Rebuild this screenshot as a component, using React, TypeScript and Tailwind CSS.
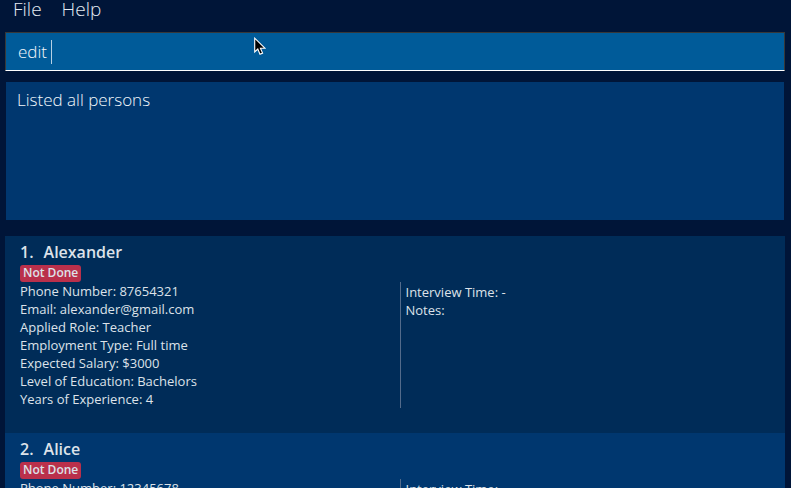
import { useState } from "react";

type Person = {
  name: string;
  status: string;
  details: [string, string][];
  interviewTime: string;
  notes: string;
};

const persons: Person[] = [
  {
    name: "Alexander",
    status: "Not Done",
    details: [
      ["Phone Number", "87654321"],
      ["Email", "alexander@gmail.com"],
      ["Applied Role", "Teacher"],
      ["Employment Type", "Full time"],
      ["Expected Salary", "$3000"],
      ["Level of Education", "Bachelors"],
      ["Years of Experience", "4"],
    ],
    interviewTime: "-",
    notes: "",
  },
  {
    name: "Alice",
    status: "Not Done",
    details: [["Phone Number", "12345678"]],
    interviewTime: "-",
    notes: "",
  },
];

function MenuBar() {
  return (
    <nav className="flex h-8 shrink-0 items-start gap-5 px-[13px] text-[19px] leading-[18px] font-light text-[#e4eaf2]">
      <button type="button">File</button>
      <button type="button">Help</button>
    </nav>
  );
}

function CommandBox() {
  const [command, setCommand] = useState("edit ");
  return (
    <div className="relative mr-1.5 ml-[5px] h-[39px] shrink-0 border border-[#383838] border-b-white bg-[#005b99] text-[17px] leading-6 font-light text-[#f2f7fc]">
      <input
        type="text"
        aria-label="Command"
        value={command}
        onChange={(e) => setCommand(e.target.value)}
        className="h-full w-full bg-transparent px-3 caret-transparent outline-none"
      />
      <div className="pointer-events-none absolute inset-0 flex items-center px-3" aria-hidden="true">
        <span className="invisible whitespace-pre">{command}</span>
        <span className="h-6 w-px bg-[#b5d0e4]" />
      </div>
      <svg className="pointer-events-none absolute top-1 left-[248px]" width="12" height="19" viewBox="0 0 12 19" aria-hidden="true">
        <path d="M.7 1.2V15l3.1-3 2.2 5.2 2.6-1.1-2.2-4.9h4.5Z" fill="#000" stroke="#fff" strokeWidth="1.1" />
      </svg>
    </div>
  );
}

function PersonCard({ person, index }: { person: Person; index: number }) {
  return (
    <li className="bg-[#002c58] pt-[5px] pb-[25px] pl-[15px] even:bg-[#00376f]">
      <h2 className="mb-0.5 flex gap-2.5 text-[16px] leading-[22px] font-semibold">
        <span>{index}.</span>
        <span>{person.name}</span>
      </h2>
      <span className="block w-fit rounded-[3px] bg-[#ba304b] px-[3px] text-[12px] leading-4 font-semibold pb-px">
        {person.status}
      </span>
      <div className="grid grid-cols-2 text-[13px] leading-[18px]">
        <div>
          {person.details.map(([label, value]) => (
            <p key={label}>
              {label}: {value}
            </p>
          ))}
        </div>
        <div className="-ml-[3px] border-l border-[#536b8b] pt-px pl-[5px]">
          <p>Interview Time: {person.interviewTime}</p>
          <p>Notes: {person.notes}</p>
        </div>
      </div>
    </li>
  );
}

export default function App() {
  return (
    <main className="flex h-screen flex-col overflow-hidden bg-[#001538] font-['Open_Sans',sans-serif] text-[#dde2e9]">
      <MenuBar />
      <CommandBox />
      <output className="mr-[7px] ml-1.5 mt-[11px] block h-[138px] shrink-0 bg-[#00376f] px-[11px] py-1.5 text-[17px] leading-6 font-light text-[#f2f7fc]">
        Listed all persons
      </output>
      <ul className="mt-4 mr-1.5 ml-[5px] min-h-0 flex-1 overflow-hidden">
        {persons.map((person, i) => (
          <PersonCard key={person.name} person={person} index={i + 1} />
        ))}
      </ul>
    </main>
  );
}
